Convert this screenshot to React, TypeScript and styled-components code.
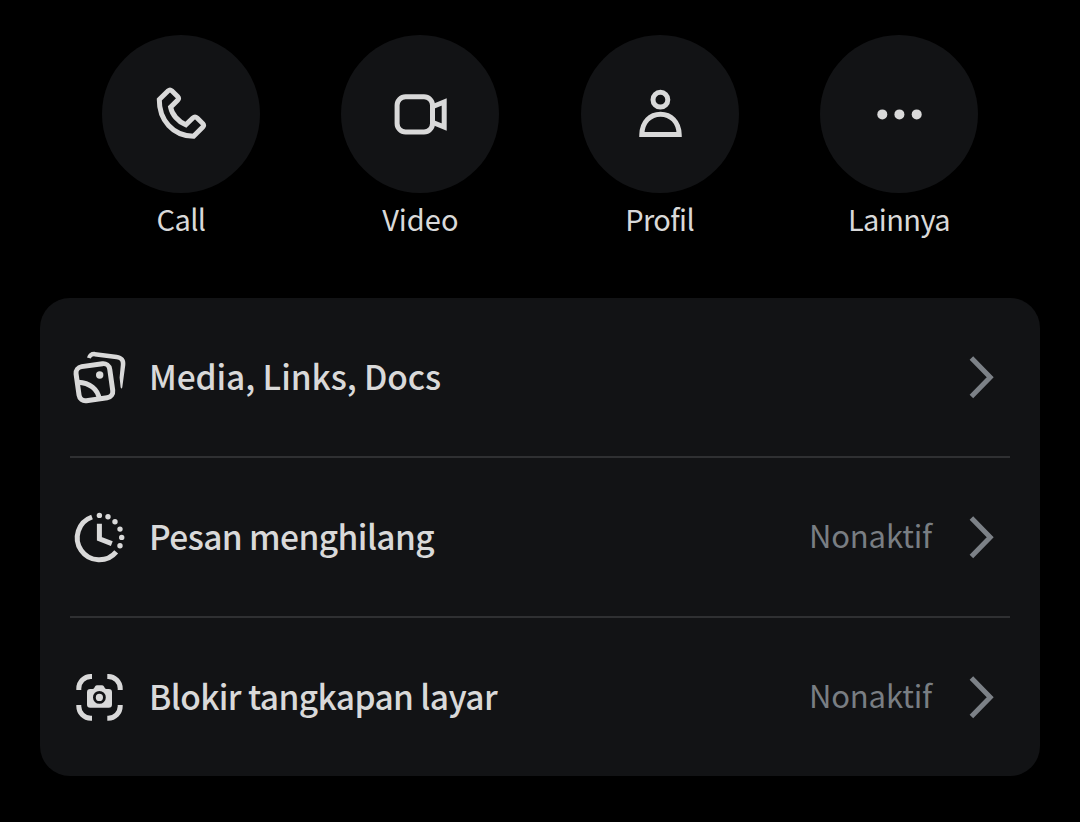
import type { ReactNode } from 'react';
import styled, { createGlobalStyle } from 'styled-components';

const GlobalStyle = createGlobalStyle`
  * {
    box-sizing: border-box;
  }

  body {
    margin: 0;
    background: #000;
    color: #d9d9d9;
    font-family: 'Noto Sans CJK JP', 'Noto Sans', sans-serif;
  }
`;

interface TextProps {
  $spacing?: number;
}

const Page = styled.main`
  width: 1080px;
  height: 822px;
  padding: 35px 40px 0;
  overflow: hidden;
`;

const Actions = styled.nav`
  display: flex;
  justify-content: space-between;
  height: 263px;
  padding: 0 62px;
`;

const Action = styled.div`
  display: flex;
  flex-direction: column;
  align-items: center;
  width: 158px;
`;

const ActionCircle = styled.div`
  display: flex;
  align-items: center;
  justify-content: center;
  width: 158px;
  height: 158px;
  border-radius: 50%;
  background: #121315;
`;

const ActionLabel = styled.span<TextProps>`
  margin-top: 3px;
  font-size: 29px;
  line-height: 44px;
  white-space: nowrap;
  letter-spacing: ${({ $spacing = 0 }) => $spacing}px;
`;

const Card = styled.section`
  padding: 0 30px;
  border-radius: 30px;
  background: #121315;
`;

const Row = styled.div`
  display: flex;
  align-items: center;
  height: 158px;

  & + & {
    height: 160px;
    border-top: 2px solid #2f3032;
  }
`;

const RowLabel = styled.span<TextProps>`
  flex: 1;
  margin-left: 19px;
  padding-bottom: 3px;
  font-size: 33.5px;
  font-weight: 500;
  line-height: 50px;
  white-space: nowrap;
  letter-spacing: ${({ $spacing = 0 }) => $spacing}px;
`;

const RowValue = styled.span`
  margin-right: 28px;
  padding-bottom: 4px;
  color: #797e83;
  font-size: 31px;
  line-height: 50px;
  letter-spacing: -0.15px;
`;

const Icon = styled.svg.attrs({ viewBox: '0 0 60 60' })`
  display: block;
  flex: none;
  width: 60px;
  height: 60px;
  fill: none;
  stroke: #d9d9d9;
  stroke-width: 5;

  .solid {
    fill: #d9d9d9;
    stroke: none;
  }
`;

const Chevron = styled.svg.attrs({ viewBox: '0 0 50 60' })`
  flex: none;
  width: 50px;
  height: 60px;
  fill: none;
  stroke: #7c8187;
  stroke-width: 5;
`;

const PhoneIcon = () => (
  <Icon>
    <path d="M8.3 15.5 17.2 6.8Q19 5.2 20.8 6.8L26.6 12.4Q28.3 14.2 26.8 16L19.6 23.2C21 30.5 27 37.5 34.8 40.8L41.8 34Q44 32 46.2 34L51.8 39.6Q53.3 41.4 51.8 43L42.6 52.3C22 52 8 36 8.3 15.5Z" />
  </Icon>
);

const VideoIcon = () => (
  <Icon>
    <rect x="7.1" y="12.8" width="35.4" height="35.2" rx="8.5" />
    <path d="M43 22.5 54.2 17.9V43.1L43 38.5" />
  </Icon>
);

const ProfileIcon = () => (
  <Icon>
    <circle cx="30.4" cy="15.7" r="7.4" />
    <path d="M11.8 50.4C12.2 38 20 30.2 30.5 30.2S48.8 38 49.2 50.4Z" />
  </Icon>
);

const MoreIcon = () => (
  <Icon>
    <circle className="solid" cx="13.3" cy="30.4" r="5" />
    <circle className="solid" cx="30.4" cy="30.4" r="5" />
    <circle className="solid" cx="47.7" cy="30.4" r="5" />
  </Icon>
);

const MediaIcon = () => (
  <Icon>
    <rect x="7.4" y="18" width="34" height="34.4" rx="6.5" transform="rotate(-8 24.4 35.2)" />
    <path d="M8.2 35.2C19.5 35.8 28 42 29.4 52.5" />
    <circle className="solid" cx="29.7" cy="28" r="3.7" />
    <path className="solid" d="M17 10.6C18.3 6.5 20.8 4.6 25 4.9L46.8 7.8C53 8.8 56 12.2 55.3 18L52.3 40.2Q51.6 42.6 50.6 40.2L49.6 30.5L50.8 17.8C51.1 14.2 49.8 12.8 46.4 12.3L24.6 9.4C22.7 9.2 21.7 9.8 20.8 11.6Z" />
  </Icon>
);

const dots = [
  [29.4, 8.4],
  [38, 9.7],
  [45, 14.7],
  [50, 22.1],
  [51.7, 30.4],
  [50, 38.7],
];

const TimerIcon = () => (
  <Icon>
    <path d="M22 10A22 22 0 1 0 46.2 44.8" />
    <path d="M29.4 16.7V31.8L41.8 36.7" />
    {dots.map(([cx, cy]) => (
      <circle className="solid" key={cx + cy} cx={cx} cy={cy} r="2.7" />
    ))}
  </Icon>
);

const CaptureIcon = () => (
  <Icon>
    <path d="M8.8 23V21.5A12 12 0 0 1 20.8 9.5H22M37.3 9.5H38.2A12 12 0 0 1 50.2 21.5V23M50.2 38V39.2A12 12 0 0 1 38.2 51.2H37.3M22 51.2H20.8A12 12 0 0 1 8.8 39.2V38" />
    <path
      className="solid"
      fillRule="evenodd"
      d="M20.3 22H22.6Q23.6 22 24.2 21L25 19.6Q25.8 18.3 27.2 18.3H31.8Q33.2 18.3 34 19.6L34.8 21Q35.4 22 36.4 22H38.7Q42 22 42 25.2V37.4Q42 40.7 38.7 40.7H20.3Q17 40.7 17 37.4V25.2Q17 22 20.3 22ZM29.4 24A6.4 6.4 0 1 0 29.4 36.8A6.4 6.4 0 1 0 29.4 24Z"
    />
    <circle className="solid" cx="29.4" cy="30.4" r="3.6" />
  </Icon>
);

interface ActionType {
  label: string;
  icon: ReactNode;
  spacing: number;
}

interface SettingType extends ActionType {
  value?: string;
}

const actions: ActionType[] = [
  { label: 'Call', icon: <PhoneIcon />, spacing: -0.6 },
  { label: 'Video', icon: <VideoIcon />, spacing: 0 },
  { label: 'Profil', icon: <ProfileIcon />, spacing: -0.6 },
  { label: 'Lainnya', icon: <MoreIcon />, spacing: -0.6 },
];

const settings: SettingType[] = [
  { label: 'Media, Links, Docs', icon: <MediaIcon />, spacing: -0.1 },
  { label: 'Pesan menghilang', icon: <TimerIcon />, spacing: -0.58, value: 'Nonaktif' },
  { label: 'Blokir tangkapan layar', icon: <CaptureIcon />, spacing: -0.6, value: 'Nonaktif' },
];

export default function App() {
  return (
    <Page>
      <GlobalStyle />
      <Actions>
        {actions.map(({ label, icon, spacing }) => (
          <Action key={label}>
            <ActionCircle>{icon}</ActionCircle>
            <ActionLabel $spacing={spacing}>{label}</ActionLabel>
          </Action>
        ))}
      </Actions>
      <Card>
        {settings.map(({ label, icon, value, spacing }) => (
          <Row key={label}>
            {icon}
            <RowLabel $spacing={spacing}>{label}</RowLabel>
            {value && <RowValue>{value}</RowValue>}
            <Chevron>
              <path d="M11.4 11 30.2 30.2 11.4 49.4" />
            </Chevron>
          </Row>
        ))}
      </Card>
    </Page>
  );
}
